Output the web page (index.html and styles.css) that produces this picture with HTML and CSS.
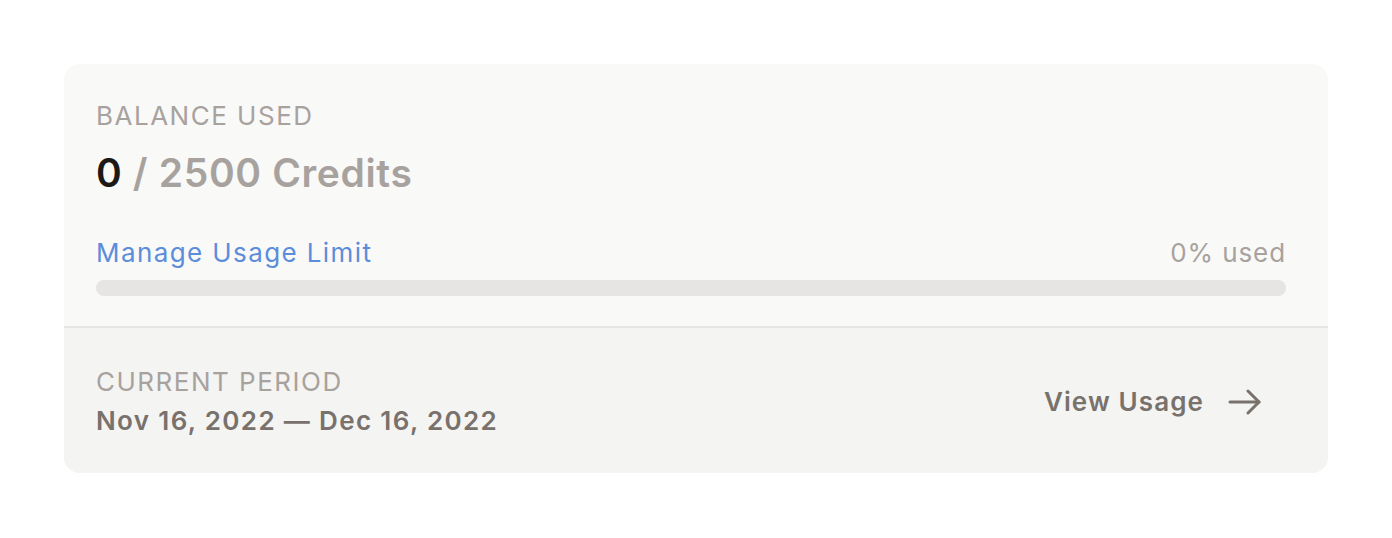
FILE: index.html
```html
<!DOCTYPE html>
<html>
<head>
    <title>Balance</title>
    <link rel="stylesheet" href="styles.css">
</head>
<body>
    <div class="card">
        <div class="balance">
            <div class="label">Balance Used</div>
            <div class="credits"><span class="used">0</span> / 2500 Credits</div>
            <div class="usage-row">
                <a class="manage" href="#">Manage Usage Limit</a>
                <span class="percent">0% used</span>
            </div>
            <div class="bar"><div class="fill" style="width: 0%"></div></div>
        </div>
        <div class="period">
            <div>
                <div class="label">Current Period</div>
                <div class="dates">Nov 16, 2022 — Dec 16, 2022</div>
            </div>
            <a class="view" href="#">
                View Usage
                <svg width="34" height="26" viewBox="0 0 34 26" fill="none" stroke="#78716c" stroke-width="3" stroke-linecap="round" stroke-linejoin="round">
                    <path d="M2 13h29"/>
                    <path d="M20 2l11 11-11 11"/>
                </svg>
            </a>
        </div>
    </div>
</body>
</html>
```

FILE: styles.css
```css
body {
    font-family: 'Inter', sans-serif;
    margin: 0;
    padding: 64px;
    background-color: #fff;
}

.card {
    border-radius: 16px;
    overflow: hidden;
    background-color: #f9f9f8;
}

.balance {
    padding: 32px 42px 30px 32px;
    border-bottom: 2px solid #e7e6e4;
}

.label {
    font-size: 26px;
    line-height: 40px;
    letter-spacing: 1.5px;
    text-transform: uppercase;
    color: #a8a29e;
}

.credits {
    margin-top: 9px;
    font-size: 39px;
    line-height: 56px;
    letter-spacing: 0.65px;
    font-weight: 600;
    color: #a8a29e;
}

.used {
    color: #1c1917;
}

.usage-row {
    display: flex;
    justify-content: space-between;
    align-items: baseline;
    margin-top: 32px;
}

.manage {
    font-size: 26px;
    line-height: 40px;
    letter-spacing: 1.4px;
    color: #5b8ddb;
    text-decoration: none;
}

.percent {
    font-size: 26px;
    letter-spacing: 0.9px;
    color: #a8a29e;
}

.bar {
    margin-top: 7px;
    height: 16px;
    border-radius: 8px;
    background-color: #e6e5e3;
}

.fill {
    height: 100%;
    border-radius: 8px;
    background-color: #5b8ddb;
}

.period {
    display: flex;
    justify-content: space-between;
    align-items: center;
    padding: 36px 66px 34px 32px;
    background-color: #f4f4f3;
}

.period .label {
    line-height: 36px;
}

.dates {
    margin-top: 3px;
    font-size: 26px;
    line-height: 36px;
    letter-spacing: 1.35px;
    font-weight: 600;
    color: #78716c;
}

.view {
    display: flex;
    align-items: center;
    gap: 24px;
    font-size: 26px;
    letter-spacing: 1.1px;
    font-weight: 600;
    color: #78716c;
    text-decoration: none;
}
```
